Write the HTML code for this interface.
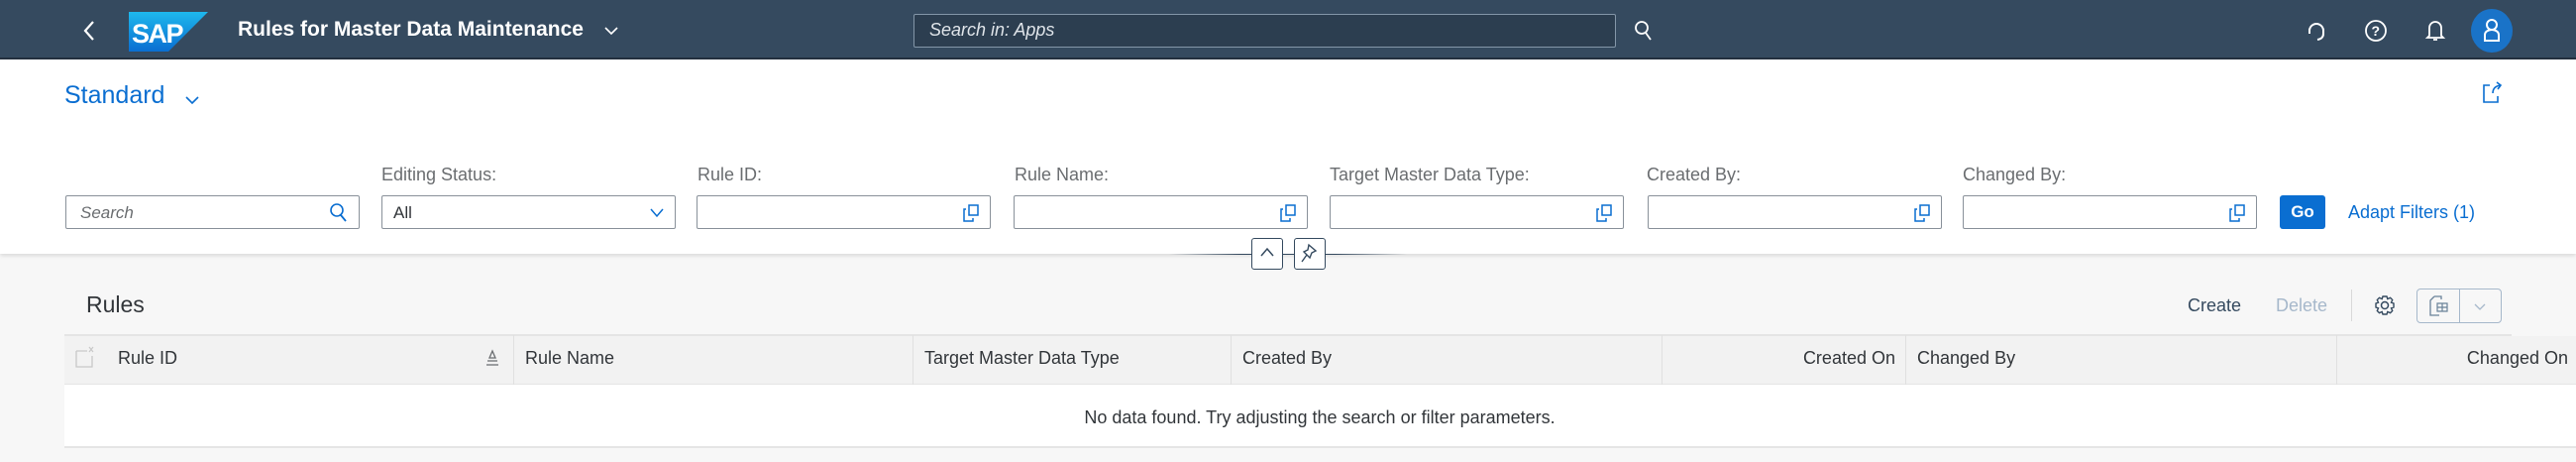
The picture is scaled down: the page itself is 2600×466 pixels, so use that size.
<!DOCTYPE html>
<html><head><meta charset="utf-8"><style>
*{box-sizing:border-box;margin:0;padding:0}
body{width:2600px;height:466px;background:#f7f7f7;font-family:"Liberation Sans",sans-serif;position:relative;overflow:hidden;color:#32363a}
.a{position:absolute}
.hdr{left:0;top:0;width:2600px;height:60px;background:#354a5f;border-bottom:2px solid #24313f}
.top{left:0;top:60px;width:2600px;height:196px;background:#fff;box-shadow:0 2px 4px rgba(0,0,0,.12)}
.lbl{top:166px;font-size:18px;color:#6a6d70}
.inp{top:197px;height:34px;width:297px;background:#fff;border:1px solid #89919a;border-radius:2px}
.vh{position:absolute;right:10px;top:8px}
.th{font-size:18px;color:#32363a;top:351px}
.sep{top:338px;width:1px;height:50px;background:#e0e0e0}
</style></head><body>
<div class="a hdr"></div>
<svg class="a" style="left:82px;top:20px" width="16" height="22"><path d="M12 2 L4 11 L12 20" stroke="#fff" stroke-width="2.2" fill="none"/></svg>
<svg class="a" style="left:130px;top:12px" width="80" height="40"><defs><linearGradient id="g" x1="0" y1="0" x2="0" y2="1"><stop offset="0" stop-color="#1eb8ed"/><stop offset="1" stop-color="#0a6ed1"/></linearGradient></defs><path d="M0 0H80L40 40H0Z" fill="url(#g)"/><text x="3" y="31" font-family="Liberation Sans" font-weight="bold" font-size="27" fill="#fff" letter-spacing="-1.5">SAP</text></svg>
<div class="a" style="left:240px;top:18px;color:#fff;font-weight:bold;font-size:21px">Rules for Master Data Maintenance</div>
<svg class="a" style="left:609px;top:25px" width="16" height="12"><path d="M2 3 L8 9 L14 3" stroke="#fff" stroke-width="1.6" fill="none"/></svg>
<div class="a" style="left:922px;top:14px;width:709px;height:34px;border:1px solid #8396a8;background:#2c3e50;border-radius:2px"></div>
<div class="a" style="left:938px;top:20px;color:#dfe4e9;font-style:italic;font-size:18px">Search in: Apps</div>
<svg class="a" style="left:1649px;top:20px" width="20" height="22"><circle cx="8" cy="8" r="6" stroke="#fff" stroke-width="1.8" fill="none"/><path d="M12 13 L17 20" stroke="#fff" stroke-width="1.8"/></svg>
<svg class="a" style="left:2327px;top:19px" width="22" height="24"><path d="M4 12 A7 7 0 1 1 18 12 M4 10 V15 M18 10 V15 Q18 20 12 21" stroke="#fff" stroke-width="2" fill="none"/></svg>
<svg class="a" style="left:2386px;top:19px" width="24" height="24"><circle cx="12" cy="12" r="10" stroke="#fff" stroke-width="1.8" fill="none"/><text x="7.5" y="17" fill="#fff" font-size="14" font-family="Liberation Sans" font-weight="bold">?</text></svg>
<svg class="a" style="left:2447px;top:18px" width="22" height="26"><path d="M5 18 V10 A6 6 0 0 1 17 10 V18 L19 20 H3 Z M9 22 H13" stroke="#fff" stroke-width="1.8" fill="none"/></svg>
<div class="a" style="left:2494px;top:9px;width:42px;height:44px;border-radius:50%;background:#1a73c8"></div>
<svg class="a" style="left:2505px;top:18px" width="20" height="26"><circle cx="10" cy="7" r="5" stroke="#fff" stroke-width="2" fill="none"/><path d="M3 23 V17 A7 5 0 0 1 17 17 V23 Z" stroke="#fff" stroke-width="2" fill="none"/></svg>

<div class="a top"></div>
<div class="a" style="left:65px;top:82px;font-size:25px;color:#0a6ed1">Standard</div>
<svg class="a" style="left:186px;top:95px" width="16" height="12"><path d="M2 3 L8 9 L14 3" stroke="#0a6ed1" stroke-width="1.6" fill="none"/></svg>
<svg class="a" style="left:2504px;top:80px" width="24" height="26"><path d="M9 6 H3 V23 H17 V17 M12 14 Q12 7 20 6 M16 3 L20 6 L17 10" stroke="#0a6ed1" stroke-width="1.6" fill="none"/></svg>

<div class="a lbl" style="left:385px">Editing Status:</div>
<div class="a lbl" style="left:704px">Rule ID:</div>
<div class="a lbl" style="left:1024px">Rule Name:</div>
<div class="a lbl" style="left:1342px">Target Master Data Type:</div>
<div class="a lbl" style="left:1662px">Created By:</div>
<div class="a lbl" style="left:1981px">Changed By:</div>

<div class="a inp" style="left:66px"><span style="position:absolute;left:14px;top:7px;font-size:17px;font-style:italic;color:#6a6d70">Search</span><svg class="vh" style="top:6px" width="20" height="22"><circle cx="8" cy="8" r="6" stroke="#0a6ed1" stroke-width="1.6" fill="none"/><path d="M12 13 L17 19" stroke="#0a6ed1" stroke-width="1.8"/></svg></div>
<div class="a inp" style="left:385px"><span style="position:absolute;left:11px;top:7px;font-size:17px">All</span><svg class="vh" style="top:10px" width="16" height="12"><path d="M2 3 L8 10 L14 3" stroke="#0a6ed1" stroke-width="1.5" fill="none"/></svg></div>
<div class="a inp" style="left:703px"><svg class="vh" width="18" height="18"><path d="M7 1 H16 V11 H7 Z M4 5 H2 V17 H11 V14" stroke="#0a6ed1" stroke-width="1.5" fill="none"/></svg></div>
<div class="a inp" style="left:1023px"><svg class="vh" width="18" height="18"><path d="M7 1 H16 V11 H7 Z M4 5 H2 V17 H11 V14" stroke="#0a6ed1" stroke-width="1.5" fill="none"/></svg></div>
<div class="a inp" style="left:1342px"><svg class="vh" width="18" height="18"><path d="M7 1 H16 V11 H7 Z M4 5 H2 V17 H11 V14" stroke="#0a6ed1" stroke-width="1.5" fill="none"/></svg></div>
<div class="a inp" style="left:1663px"><svg class="vh" width="18" height="18"><path d="M7 1 H16 V11 H7 Z M4 5 H2 V17 H11 V14" stroke="#0a6ed1" stroke-width="1.5" fill="none"/></svg></div>
<div class="a inp" style="left:1981px"><svg class="vh" width="18" height="18"><path d="M7 1 H16 V11 H7 Z M4 5 H2 V17 H11 V14" stroke="#0a6ed1" stroke-width="1.5" fill="none"/></svg></div>
<div class="a" style="left:2301px;top:197px;width:46px;height:34px;background:#0a6ed1;border-radius:3px;color:#fff;font-weight:bold;font-size:17px;text-align:center;line-height:34px">Go</div>
<div class="a" style="left:2370px;top:204px;font-size:18px;color:#0a6ed1">Adapt Filters (1)</div>

<div class="a" style="left:1180px;top:256px;width:240px;height:1px;background:linear-gradient(90deg,rgba(53,74,95,0),#354a5f 30%,#354a5f 70%,rgba(53,74,95,0))"></div>
<div class="a" style="left:1263px;top:240px;width:32px;height:32px;background:#fff;border:1px solid #354a5f;border-radius:3px"></div>
<svg class="a" style="left:1271px;top:248px" width="16" height="14"><path d="M2 10 L8 3 L14 10" stroke="#354a5f" stroke-width="1.5" fill="none"/></svg>
<div class="a" style="left:1306px;top:240px;width:32px;height:32px;background:#fff;border:1px solid #354a5f;border-radius:3px"></div>
<svg class="a" style="left:1312px;top:245px" width="20" height="22"><path d="M9 2 L16 8 L12 10 L10 15 L4 9 L8 7 Z M7 12 L2 19" stroke="#354a5f" stroke-width="1.4" fill="none"/></svg>

<div class="a" style="left:87px;top:294px;font-size:23px;color:#32363a">Rules</div>
<div class="a" style="left:2208px;top:298px;font-size:18px;color:#354a5f">Create</div>
<div class="a" style="left:2297px;top:298px;font-size:18px;color:#a6b8cb">Delete</div>
<div class="a" style="left:2373px;top:292px;width:1px;height:32px;background:#d9d9d9"></div>
<svg class="a" style="left:2396px;top:297px" width="22" height="22"><circle cx="11" cy="11" r="3.5" stroke="#354a5f" stroke-width="1.5" fill="none"/><path d="M9 2 H13 L13.8 4.5 L16.5 3.3 L18.7 5.5 L17.5 8.2 L20 9 V13 L17.5 13.8 L18.7 16.5 L16.5 18.7 L13.8 17.5 L13 20 H9 L8.2 17.5 L5.5 18.7 L3.3 16.5 L4.5 13.8 L2 13 V9 L4.5 8.2 L3.3 5.5 L5.5 3.3 L8.2 4.5 Z" stroke="#354a5f" stroke-width="1.4" fill="none"/></svg>
<div class="a" style="left:2439px;top:291px;width:86px;height:35px;border:1px solid #a6b8cb;border-radius:4px;background:#f7f7f7"></div>
<div class="a" style="left:2482px;top:292px;width:1px;height:33px;background:#a6b8cb"></div>
<svg class="a" style="left:2450px;top:297px" width="24" height="24"><path d="M7 2 H14 V5 M7 2 L3 6 V21 H12" stroke="#6a8299" stroke-width="1.3" fill="none"/><path d="M10 9 H20 V17 H10 Z M10 13 H20 M15 9 V17" stroke="#6a8299" stroke-width="1.2" fill="none"/></svg>
<svg class="a" style="left:2496px;top:305px" width="14" height="10"><path d="M2 2 L7 7 L12 2" stroke="#a6b8cb" stroke-width="1.3" fill="none"/></svg>

<div class="a" style="left:65px;top:337px;width:2470px;height:2px;background:#e5e5e5"></div>
<div class="a" style="left:65px;top:339px;width:2535px;height:49px;background:#f2f2f2;border-bottom:1px solid #e5e5e5"></div>
<div class="a" style="left:65px;top:388px;width:2535px;height:64px;background:#fff;border-bottom:2px solid #e5e5e5"></div>
<svg class="a" style="left:75px;top:348px" width="22" height="24"><path d="M2 6 V22 H18 V11" stroke="#c8c8c8" stroke-width="1.3" fill="none"/><path d="M2 6 H13 M15 2 L19 7 M19 2 L15 7" stroke="#c8c8c8" stroke-width="1.2" fill="none"/></svg>
<div class="a th" style="left:119px">Rule ID</div>
<svg class="a" style="left:489px;top:352px" width="16" height="18"><path d="M8 2 L5 9 H11 Z M3 12 H13 M2 16 H14" stroke="#6a6d70" stroke-width="1.3" fill="none"/></svg>
<div class="a sep" style="left:518px"></div>
<div class="a th" style="left:530px">Rule Name</div>
<div class="a sep" style="left:921px"></div>
<div class="a th" style="left:933px">Target Master Data Type</div>
<div class="a sep" style="left:1242px"></div>
<div class="a th" style="left:1254px">Created By</div>
<div class="a sep" style="left:1677px"></div>
<div class="a th" style="left:1700px;width:213px;text-align:right">Created On</div>
<div class="a sep" style="left:1923px"></div>
<div class="a th" style="left:1935px">Changed By</div>
<div class="a sep" style="left:2358px"></div>
<div class="a th" style="left:2370px;width:222px;text-align:right">Changed On</div>
<div class="a" style="left:1032px;top:411px;width:600px;font-size:18px;color:#32363a;text-align:center">No data found. Try adjusting the search or filter parameters.</div>
</body></html>
